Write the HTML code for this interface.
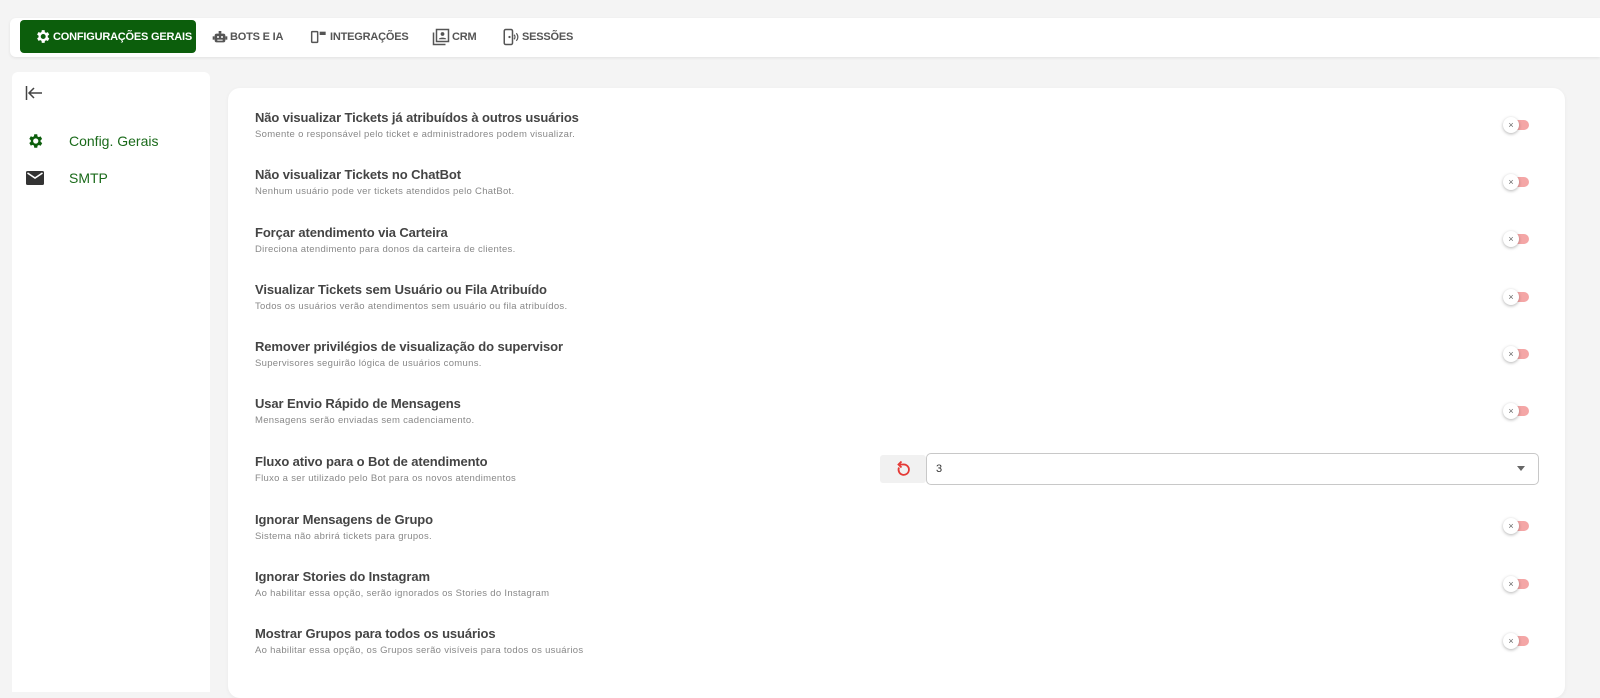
<!DOCTYPE html>
<html><head><meta charset="utf-8"><style>
*{box-sizing:border-box;margin:0;padding:0}
body{width:1600px;height:689px;overflow:hidden;background:#f4f4f4;font-family:"Liberation Sans",sans-serif;position:relative}
.top{position:absolute;left:10px;top:18px;width:1590px;height:39px;background:#fff;border-radius:6px 0 0 6px;box-shadow:0 1px 3px rgba(0,0,0,.08)}
.tab{position:absolute;top:2px;height:33px;display:flex;align-items:center;font-size:11px;font-weight:bold;color:#555;letter-spacing:-.2px}
.tab.act{background:#0c5e0c;color:#fff;border-radius:4px;left:10px;width:176px;padding-left:14px}
.tab svg{margin-right:2px}
.side{position:absolute;left:12px;top:72px;width:198px;height:620px;background:#fff;border-radius:6px 6px 0 0}
.si{position:absolute;left:14px;display:flex;align-items:center;font-size:14px;color:#1a6a1a}
.card{position:absolute;left:228px;top:88px;width:1337px;height:610px;background:#fff;border-radius:12px;box-shadow:0 1px 4px rgba(0,0,0,.05)}
.row{position:absolute;left:27px}
.t{font-size:13px;color:#444;font-weight:bold;letter-spacing:-.1px}
.d{font-size:9.5px;color:#888;margin-top:4px;letter-spacing:.3px}
.tg{position:absolute;left:1275px;width:26px;height:14px}
.tg .tr{position:absolute;left:6px;top:2px;width:20px;height:10px;border-radius:5px;background:#f4a6a6}
.tg .k{position:absolute;left:0;top:-1px;width:16px;height:16px;border-radius:50%;background:#fff;box-shadow:0 1px 3px rgba(0,0,0,.3);font-size:9px;color:#666;text-align:center;line-height:16px}
</style></head><body>
<div class="top">
 <div class="tab act"><svg width="17" height="17" viewBox="0 0 24 24"><path fill="#fff" d="M19.4 13a7.5 7.5 0 000-2l2.1-1.6-2-3.5-2.5 1a7.6 7.6 0 00-1.7-1L15 3h-4l-.4 2.7a7.6 7.6 0 00-1.7 1l-2.5-1-2 3.5L6.5 11a7.5 7.5 0 000 2l-2.1 1.6 2 3.5 2.5-1a7.6 7.6 0 001.7 1L11 21h4l.4-2.7a7.6 7.6 0 001.7-1l2.5 1 2-3.5zM13 15.5a3.5 3.5 0 110-7 3.5 3.5 0 010 7z"/></svg>CONFIGURAÇÕES GERAIS</div>
 <div class="tab" style="left:202px"><svg width="16" height="16" viewBox="0 0 24 24"><rect x="4" y="7" width="16" height="13" rx="3" fill="#555"/><rect x="10" y="3" width="4" height="4" fill="#555"/><rect x="1" y="11" width="3" height="5" fill="#555"/><rect x="20" y="11" width="3" height="5" fill="#555"/><circle cx="9" cy="12" r="1.5" fill="#fff"/><circle cx="15" cy="12" r="1.5" fill="#fff"/><rect x="8" y="16" width="8" height="1.5" fill="#fff"/></svg>BOTS E IA</div>
 <div class="tab" style="left:300px"><svg width="18" height="16" viewBox="0 0 26 24"><rect x="2" y="4" width="9" height="16" rx="1" fill="none" stroke="#555" stroke-width="2.2"/><rect x="14" y="4" width="9" height="5" fill="#555"/></svg>INTEGRAÇÕES</div>
 <div class="tab" style="left:422px"><svg width="18" height="18" viewBox="0 0 24 24"><rect x="6" y="2" width="16" height="16" fill="none" stroke="#555" stroke-width="2"/><path d="M2 6v16h16" fill="none" stroke="#555" stroke-width="2"/><circle cx="14" cy="8" r="2.5" fill="#555"/><path d="M9 15c0-3 10-3 10 0z" fill="#555"/></svg>CRM</div>
 <div class="tab" style="left:492px"><svg width="18" height="18" viewBox="0 0 24 24"><rect x="3" y="2" width="11" height="20" rx="2" fill="none" stroke="#555" stroke-width="2"/><circle cx="10" cy="12" r="1.5" fill="#555"/><path d="M16 9a4 4 0 010 6M19 7a7 7 0 010 10" fill="none" stroke="#555" stroke-width="1.6"/></svg>SESSÕES</div>
</div>
<div class="side">
 <svg style="position:absolute;left:13px;top:13px" width="18" height="16" viewBox="0 0 18 16"><path d="M1.5 1v14M17 8H4M9 3L4 8l5 5" fill="none" stroke="#444" stroke-width="1.5"/></svg>
 <div class="si" style="top:60px"><svg width="18" height="18" viewBox="0 0 24 24"><path fill="#0c5e0c" d="M19.4 13a7.5 7.5 0 000-2l2.1-1.6-2-3.5-2.5 1a7.6 7.6 0 00-1.7-1L15 3h-4l-.4 2.7a7.6 7.6 0 00-1.7 1l-2.5-1-2 3.5L6.5 11a7.5 7.5 0 000 2l-2.1 1.6 2 3.5 2.5-1a7.6 7.6 0 001.7 1L11 21h4l.4-2.7a7.6 7.6 0 001.7-1l2.5 1 2-3.5zM13 15.5a3.5 3.5 0 110-7 3.5 3.5 0 010 7z"/></svg><span style="margin-left:25px">Config. Gerais</span></div>
 <div class="si" style="top:98px"><svg width="18" height="16" viewBox="0 0 18 14"><rect width="18" height="14" rx="1.5" fill="#333"/><path d="M1.5 2l7.5 5 7.5-5" fill="none" stroke="#fff" stroke-width="1.6"/></svg><span style="margin-left:25px">SMTP</span></div>
</div>
<div class="card">
 <div class="row" style="top:22px"><div class="t">Não visualizar Tickets já atribuídos à outros usuários</div><div class="d">Somente o responsável pelo ticket e administradores podem visualizar.</div></div>
 <div class="row" style="top:79px"><div class="t">Não visualizar Tickets no ChatBot</div><div class="d">Nenhum usuário pode ver tickets atendidos pelo ChatBot.</div></div>
 <div class="row" style="top:137px"><div class="t">Forçar atendimento via Carteira</div><div class="d">Direciona atendimento para donos da carteira de clientes.</div></div>
 <div class="row" style="top:194px"><div class="t">Visualizar Tickets sem Usuário ou Fila Atribuído</div><div class="d">Todos os usuários verão atendimentos sem usuário ou fila atribuídos.</div></div>
 <div class="row" style="top:251px"><div class="t">Remover privilégios de visualização do supervisor</div><div class="d">Supervisores seguirão lógica de usuários comuns.</div></div>
 <div class="row" style="top:308px"><div class="t">Usar Envio Rápido de Mensagens</div><div class="d">Mensagens serão enviadas sem cadenciamento.</div></div>
 <div class="row" style="top:366px"><div class="t">Fluxo ativo para o Bot de atendimento</div><div class="d">Fluxo a ser utilizado pelo Bot para os novos atendimentos</div></div>
 <div class="row" style="top:424px"><div class="t">Ignorar Mensagens de Grupo</div><div class="d">Sistema não abrirá tickets para grupos.</div></div>
 <div class="row" style="top:481px"><div class="t">Ignorar Stories do Instagram</div><div class="d">Ao habilitar essa opção, serão ignorados os Stories do Instagram</div></div>
 <div class="row" style="top:538px"><div class="t">Mostrar Grupos para todos os usuários</div><div class="d">Ao habilitar essa opção, os Grupos serão visíveis para todos os usuários</div></div>
 <div class="tg" style="top:30px"><div class="tr"></div><div class="k">×</div></div>
 <div class="tg" style="top:87px"><div class="tr"></div><div class="k">×</div></div>
 <div class="tg" style="top:144px"><div class="tr"></div><div class="k">×</div></div>
 <div class="tg" style="top:202px"><div class="tr"></div><div class="k">×</div></div>
 <div class="tg" style="top:259px"><div class="tr"></div><div class="k">×</div></div>
 <div class="tg" style="top:316px"><div class="tr"></div><div class="k">×</div></div>
 <div class="tg" style="top:431px"><div class="tr"></div><div class="k">×</div></div>
 <div class="tg" style="top:489px"><div class="tr"></div><div class="k">×</div></div>
 <div class="tg" style="top:546px"><div class="tr"></div><div class="k">×</div></div>
 <div style="position:absolute;left:652px;top:367px;width:46px;height:28px;background:#f1f1f1;border-radius:3px"><svg style="position:absolute;left:15px;top:6px" width="16" height="17" viewBox="0 0 16 17"><path d="M4 6.5A5.2 5.2 0 108 3.5H5" fill="none" stroke="#e53935" stroke-width="1.8"/><path d="M6.5 0.5L3.5 3.5l3 3" fill="none" stroke="#e53935" stroke-width="1.8"/></svg></div>
 <div style="position:absolute;left:698px;top:365px;width:613px;height:32px;border:1px solid #c8c8c8;border-radius:5px;font-size:11px;color:#333;padding:9px 0 0 9px">3<span style="position:absolute;right:13px;top:12px;border-left:4px solid transparent;border-right:4px solid transparent;border-top:5px solid #666"></span></div>
</div>
</body></html>
